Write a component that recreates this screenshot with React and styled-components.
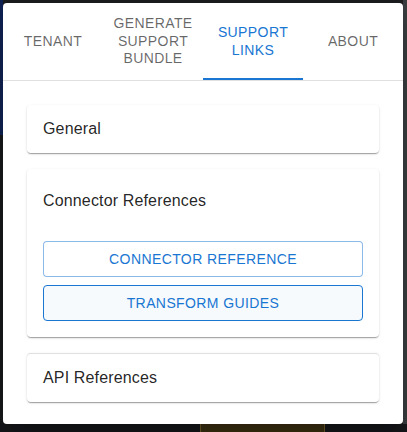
import React, { useState } from 'react';
import styled, { createGlobalStyle } from 'styled-components';

const GlobalStyle = createGlobalStyle`
    html, body {
        margin: 0;
        padding: 0;
        background: #1b1c1e;
        font-family: "Liberation Sans", Arial, sans-serif;
    }
`;

const tabs = ['TENANT', 'GENERATE SUPPORT BUNDLE', 'SUPPORT LINKS', 'ABOUT'];

export default function App() {
    const [selected, setSelected] = useState(2);

    return (
        <React.Fragment>
            <GlobalStyle />
            <Backdrop>
                <SideStrip />
                <Filler />
                <RightStrip />
                <BottomRow>
                    <BottomCell />
                    <BrownBlock />
                    <BottomCell />
                </BottomRow>
            </Backdrop>
            <Popup>
                <TabBar>
                    {tabs.map((label, i) => (
                        <Tab key={label} selected={i === selected} onClick={() => setSelected(i)}>
                            {label}
                        </Tab>
                    ))}
                </TabBar>
                <Content>
                    <Card>
                        <Summary>General</Summary>
                    </Card>
                    <Card>
                        <Summary expanded>Connector References</Summary>
                        <Details>
                            <LinkButton>CONNECTOR REFERENCE</LinkButton>
                            <LinkButton focused>TRANSFORM GUIDES</LinkButton>
                        </Details>
                    </Card>
                    <Card divider>
                        <Summary>API References</Summary>
                    </Card>
                </Content>
            </Popup>
        </React.Fragment>
    );
}

const Backdrop = styled.div`
    width: 407px;
    height: 432px;
    display: grid;
    grid-template-columns: 3px 1fr 4px;
    grid-template-rows: 1fr 8px;
    background: #1b1c1e;
    overflow: hidden;
`;

const SideStrip = styled.div`
    background: linear-gradient(#0f2150 0, #0f2150 135px, #17181a 135px);
`;

const Filler = styled.div`
    background: #1b1c1e;
`;

const RightStrip = styled.div`
    background: #393c3f;
`;

const BottomRow = styled.div`
    grid-column: 1 / 4;
    display: grid;
    grid-template-columns: 200px 125px 1fr;
`;

const BottomCell = styled.div`
    background: #16171a;
`;

const BrownBlock = styled.div`
    background: #3b2f12;
    border-left: 1px solid #6b5a2a;
    border-right: 1px solid #6b5a2a;
`;

const Popup = styled.div`
    position: absolute;
    top: 3px;
    left: 3px;
    width: 400px;
    height: 421px;
    background: #fff;
    border-radius: 4px;
    display: flex;
    flex-direction: column;
    overflow: hidden;
    box-shadow: 0 11px 15px -7px rgba(0,0,0,0.2), 0 24px 38px 3px rgba(0,0,0,0.14);
`;

const TabBar = styled.div`
    display: flex;
    height: 77px;
    border-bottom: 1px solid #e0e0e0;
    flex-shrink: 0;
`;

const Tab = styled.div`
    width: 100px;
    box-sizing: border-box;
    padding: 0 12px;
    display: flex;
    align-items: center;
    justify-content: center;
    text-align: center;
    font-size: 14px;
    line-height: 17.5px;
    letter-spacing: 0.4px;
    color: ${props => props.selected ? '#1976d2' : 'rgba(0,0,0,0.6)'};
    border-bottom: 2px solid ${props => props.selected ? '#1976d2' : 'transparent'};
    padding-top: 2px;
    cursor: pointer;
    user-select: none;
`;

const Content = styled.div`
    padding: 24px;
    display: flex;
    flex-direction: column;
    gap: 16px;
`;

const Card = styled.div`
    position: relative;
    background: #fff;
    border-radius: 4px;
    box-shadow: 0px 2px 1px -1px rgba(0,0,0,0.2), 0px 1px 1px 0px rgba(0,0,0,0.14), 0px 1px 3px 0px rgba(0,0,0,0.12);
    border-top: ${props => props.divider ? '1px solid rgba(0,0,0,0.12)' : 'none'};
`;

const Summary = styled.div`
    display: flex;
    align-items: center;
    min-height: ${props => props.expanded ? '64px' : '48px'};
    padding: 0 16px;
    font-size: 16px;
    color: rgba(0,0,0,0.87);
    letter-spacing: 0.15px;
`;

const Details = styled.div`
    padding: 8px 16px 16px;
    display: flex;
    flex-direction: column;
    gap: 8px;
`;

const LinkButton = styled.button`
    height: 36px;
    border-radius: 4px;
    font-family: "Liberation Sans", Arial, sans-serif;
    font-size: 14px;
    letter-spacing: 0.4px;
    color: #1976d2;
    background: ${props => props.focused ? 'rgba(25,118,210,0.04)' : '#fff'};
    border: 1px solid ${props => props.focused ? '#1976d2' : 'rgba(25,118,210,0.5)'};
    cursor: pointer;
`;
